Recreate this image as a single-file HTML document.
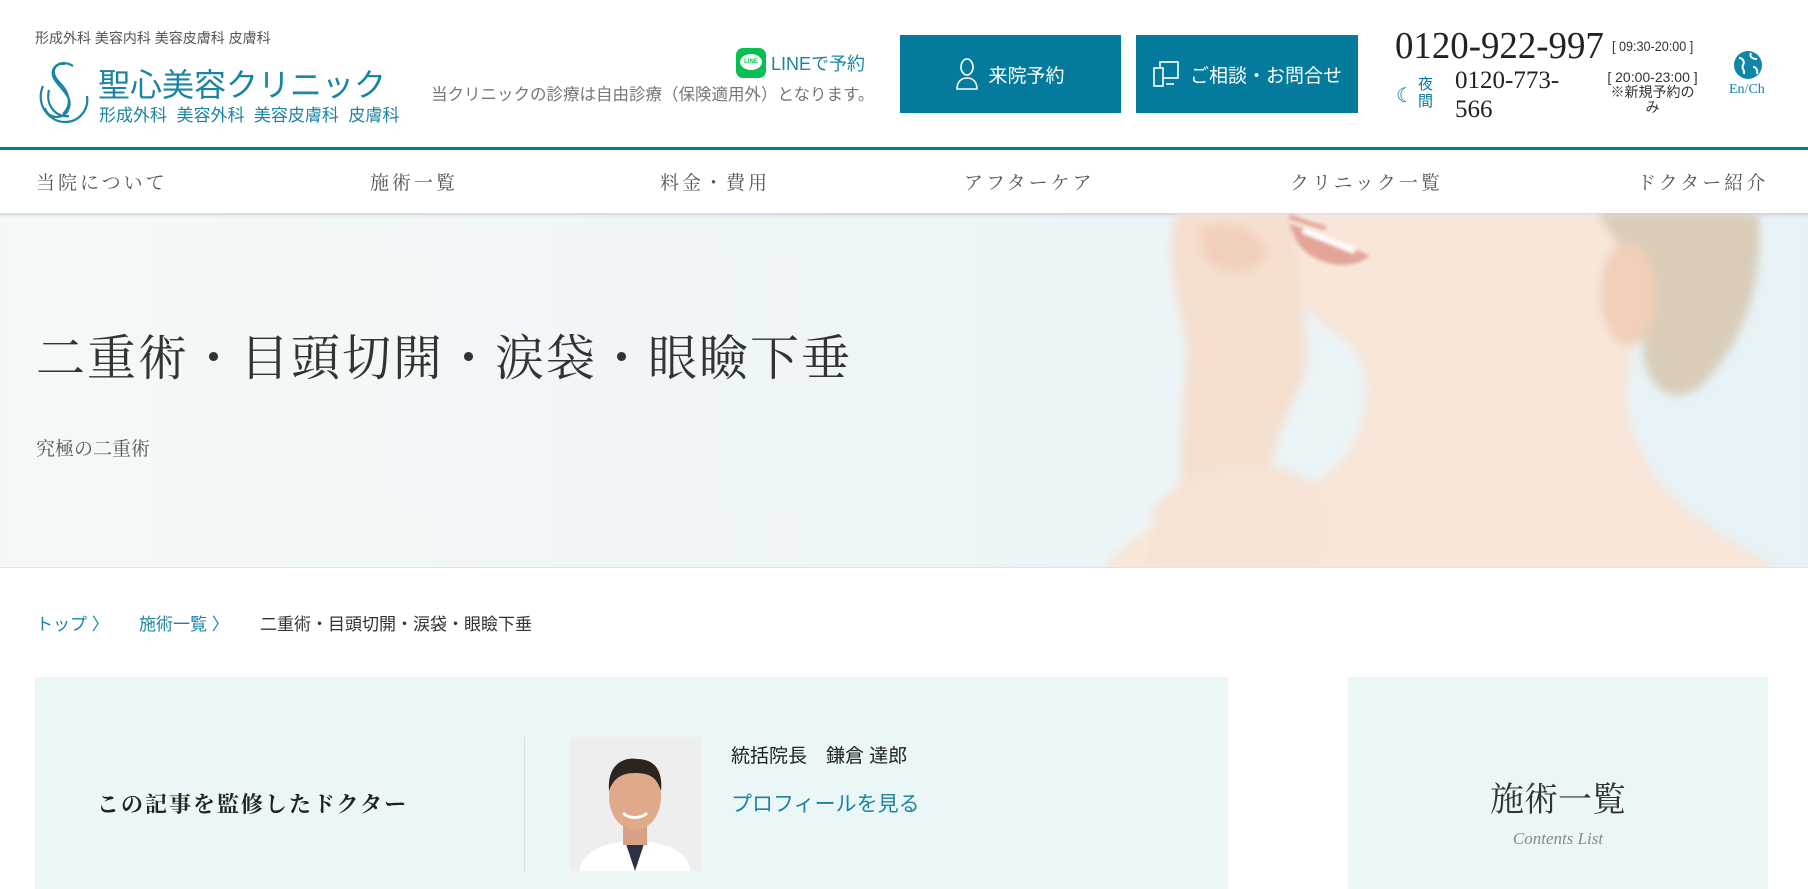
<!DOCTYPE html>
<html><head><meta charset="utf-8">
<style>
*{margin:0;padding:0;box-sizing:border-box}
body{width:1808px;height:889px;overflow:hidden;background:#fff;font-family:"Liberation Sans","Noto Sans CJK JP",sans-serif;position:relative;color:#333}
.a{position:absolute;white-space:nowrap}
.serif{font-family:"Liberation Serif","Noto Serif CJK SC",serif}
.btn{position:absolute;background:#047b9c;color:#fff;font-size:19px;display:flex;align-items:center;justify-content:center;gap:10px}
.nav{position:absolute;top:168px;font-size:19px;color:#555;letter-spacing:3px;font-family:"Liberation Serif","Noto Serif CJK SC",serif}
</style></head><body>
<div class="a" style="left:35px;top:28px;font-size:14px;color:#555">形成外科 美容内科 美容皮膚科 皮膚科</div>
<svg class="a" style="left:35px;top:60px" width="56" height="64" viewBox="0 0 56 64"><g fill="none" stroke="#1b84a3" stroke-width="2.2"><path d="M38 6C26 -2 12 8 20 20C28 32 40 38 32 52C26 60 12 58 10 48"/><path d="M30 4C20 2 14 12 24 22C34 32 38 44 28 54"/><path d="M8 26C0 44 14 62 30 62C44 62 54 50 52 36"/><path d="M14 30C10 46 22 58 34 56"/></g></svg>
<div class="a" style="left:98px;top:60px;font-size:32px;color:#1b84a3;letter-spacing:0px">聖心美容クリニック</div>
<div class="a" style="left:99px;top:101px;font-size:17px;color:#1b84a3">形成外科 &nbsp;美容外科 &nbsp;美容皮膚科 &nbsp;皮膚科</div>
<div class="a" style="left:736px;top:48px;width:30px;height:30px;background:#06c152;border-radius:7px"><div style="position:absolute;left:4px;top:6px;width:22px;height:16px;background:#fff;border-radius:50%;font-size:6px;color:#06c152;text-align:center;line-height:16px;font-weight:bold">LINE</div></div>
<div class="a" style="left:771px;top:50px;font-size:18px;color:#1b84a3">LINEで予約</div>
<div class="a" style="left:431px;top:81px;font-size:16.5px;color:#777">当クリニックの診療は自由診療（保険適用外）となります。</div>
<div class="btn" style="left:900px;top:35px;width:221px;height:78px"><svg width="22" height="32" viewBox="0 0 22 32" fill="none" stroke="#fff" stroke-width="1.6"><ellipse cx="11" cy="9" rx="6" ry="8"/><path d="M1 31C1 24 5 20 11 20C17 20 21 24 21 31Z"/></svg>来院予約</div>
<div class="btn" style="left:1136px;top:35px;width:222px;height:78px"><svg width="28" height="28" viewBox="0 0 28 28" fill="none" stroke="#fff" stroke-width="1.6"><rect x="8" y="2" width="18" height="16"/><rect x="2" y="8" width="9" height="18" fill="#047b9c"/><path d="M14 24h8"/></svg>ご相談・お問合せ</div>
<div class="a serif" style="left:1395px;top:24px;font-size:38px;color:#222;transform:scaleX(.97);transform-origin:left">0120-922-997</div>
<div class="a" style="left:1612px;top:38px;font-size:14px;color:#333;transform:scaleX(.9);transform-origin:left">[ 09:30-20:00 ]</div>
<div class="a" style="left:1396px;top:83px;font-size:20px;color:#047b9c">☾</div>
<div class="a" style="left:1418px;top:76px;font-size:15px;color:#047b9c;line-height:17px;white-space:normal;width:16px">夜間</div>
<div class="a serif" style="left:1455px;top:66px;font-size:25px;color:#222;line-height:29px;white-space:normal;width:110px">0120-773-566</div>
<div class="a" style="left:1600px;top:70px;font-size:14px;color:#333;line-height:15px;text-align:center;width:105px;white-space:normal">[ 20:00-23:00 ]<br>※新規予約の<br>み</div>
<svg class="a" style="left:1733px;top:50px" width="30" height="30" viewBox="0 0 30 30"><circle cx="15" cy="15" r="14" fill="#0e86a8"/><path d="M6 8c4 0 6 4 4 7s2 5 1 9M18 3c-2 4 2 6 6 6M20 17c3 0 5 3 4 7" stroke="#fff" stroke-width="2" fill="none"/></svg>
<div class="a serif" style="left:1729px;top:82px;font-size:14px;color:#0e86a8">En/Ch</div>
<div class="a" style="left:0;top:147px;width:1808px;height:3px;background:#047b9c"></div>
<div class="nav" style="left:36px">当院について</div>
<div class="nav" style="left:370px">施術一覧</div>
<div class="nav" style="left:660px">料金・費用</div>
<div class="nav" style="left:964px">アフターケア</div>
<div class="nav" style="left:1290px">クリニック一覧</div>
<div class="nav" style="left:1637px">ドクター紹介</div>
<div class="a" style="left:0;top:213px;width:1808px;height:354px;background:linear-gradient(90deg,#f5f8f9 0%,#eef5f7 50%,#e6f2f6 100%);box-shadow:inset 0 4px 5px -3px rgba(0,0,0,.2);overflow:hidden">
<svg width="1808" height="354" style="position:absolute;left:0;top:0" viewBox="0 185 1568 307" preserveAspectRatio="none">
<defs><filter id="b"><feGaussianBlur stdDeviation="4"/></filter><filter id="c"><feGaussianBlur stdDeviation="1.5"/></filter></defs>
<g filter="url(#b)">
<path d="M1125,185 L1420,185 L1420,290 C1410,330 1400,360 1440,420 C1480,460 1520,480 1545,495 L955,495 C990,450 1040,440 1100,430 C1150,420 1180,400 1185,340 C1185,310 1170,295 1150,285 C1120,260 1110,230 1125,185Z" fill="#f8e6d9"/>
<path d="M1020,185 L1125,185 C1120,240 1140,290 1130,330 C1110,370 1100,400 1100,430 L1030,495 C1020,420 1025,360 1030,300 C1020,260 1010,220 1020,185Z" fill="#f5dfcf"/>
<path d="M1040,200 C1060,190 1090,195 1100,220 C1090,240 1060,240 1045,225Z" fill="#f1d0bb"/>
<path d="M1385,185 L1525,185 C1530,250 1510,300 1475,335 C1450,355 1425,335 1425,300 L1425,240 C1410,220 1395,200 1385,185Z" fill="#d9cdb9"/>
<ellipse cx="1412" cy="255" rx="24" ry="45" fill="#f1cfb8"/>
<path d="M1000,440 C1040,400 1100,390 1140,420 C1160,450 1150,480 1140,495 L995,495Z" fill="#f7e3d5"/>
</g>
<g filter="url(#c)">
<path d="M1118,195 C1140,200 1160,210 1188,222 C1170,238 1135,228 1125,210Z" fill="#e3a597"/>
<path d="M1130,200 C1145,206 1160,212 1175,218" stroke="#fff" stroke-width="5" fill="none"/>
<path d="M1118,188 C1130,192 1140,196 1150,198" stroke="#e3a597" stroke-width="4" fill="none"/>
</g>
</svg>
</div>
<div class="a serif" style="left:36px;top:320px;font-size:49px;color:#333;letter-spacing:2px">二重術・目頭切開・涙袋・眼瞼下垂</div>
<div class="a serif" style="left:36px;top:434px;font-size:19px;color:#555">究極の二重術</div>
<div class="a" style="left:0;top:567px;width:1808px;height:1px;background:#e3e3e3"></div>
<div class="a" style="left:36px;top:610px;font-size:17px;color:#1b84a3">トップ 〉</div>
<div class="a" style="left:139px;top:610px;font-size:17px;color:#1b84a3">施術一覧 〉</div>
<div class="a" style="left:260px;top:610px;font-size:17px;color:#333">二重術・目頭切開・涙袋・眼瞼下垂</div>
<div class="a" style="left:35px;top:677px;width:1193px;height:212px;background:#ebf6f7"></div>
<div class="a serif" style="left:97px;top:788px;font-size:22px;color:#222;font-weight:bold;letter-spacing:2px">この記事を監修したドクター</div>
<div class="a" style="left:524px;top:737px;width:1px;height:135px;background:#d6e3e5"></div>
<div class="a" style="left:569px;top:737px;width:132px;height:134px;background:#eee;overflow:hidden">
<svg width="132" height="134" viewBox="0 0 132 134"><path d="M10 134C14 112 40 104 66 104C92 104 118 112 122 134Z" fill="#fff"/><path d="M56 104L66 134L76 104Z" fill="#2a3244"/><rect x="54" y="86" width="24" height="22" fill="#d9a183"/><ellipse cx="66" cy="60" rx="26" ry="33" fill="#e0a98a"/><path d="M40 54C38 26 56 20 68 22C86 22 94 34 92 54C88 40 80 36 66 36C52 36 44 42 40 54Z" fill="#2b2420"/><path d="M54 76C60 82 72 82 78 76" stroke="#fff" stroke-width="3" fill="none"/></svg></div>
<div class="a" style="left:731px;top:741px;font-size:19px;color:#222">統括院長　鎌倉 達郎</div>
<div class="a" style="left:731px;top:788px;font-size:21px;color:#1b84a3">プロフィールを見る</div>
<div class="a" style="left:1348px;top:677px;width:420px;height:212px;background:#ebf6f7"></div>
<div class="a serif" style="left:1348px;top:772px;width:420px;text-align:center;font-size:34px;color:#333">施術一覧</div>
<div class="a serif" style="left:1348px;top:829px;width:420px;text-align:center;font-size:17px;color:#888;font-style:italic">Contents List</div>
</body></html>
